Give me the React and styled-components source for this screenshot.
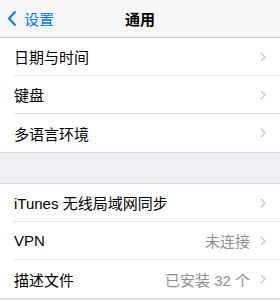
import React from "react";
import styled, { createGlobalStyle } from "styled-components";

const GlobalStyle = createGlobalStyle`
    body {
        margin: 0;
        background: #efeff4;
        font-family: "Liberation Sans", "Noto Sans CJK SC", sans-serif;
    }
`;

const Page = styled.div`
    width: 280px;
    height: 301px;
    overflow: hidden;
    background: #efeff4;
`;

const NavBar = styled.div`
    height: 37px;
    background: #f7f7f8;
    border-bottom: 1px solid #c8c7cc;
    display: grid;
    grid-template-columns: 1fr auto 1fr;
    align-items: center;
`;

const BackButton = styled.div`
    display: flex;
    align-items: center;
    gap: 7px;
    padding-left: 7px;
    color: #007aff;
    font-size: 15px;
`;

const Title = styled.div`
    font-size: 15px;
    font-weight: 600;
    color: #000;
`;

const Group = styled.div`
    background: #fff;
    border-bottom: 1px solid #d9d9de;
    border-top: ${(p) => (p.top ? "1px solid #d9d9de" : "none")};
`;

const Row = styled.div`
    height: 38px;
    margin-left: 14px;
    padding-right: 14px;
    display: flex;
    align-items: center;
    border-bottom: ${(p) => (p.last ? "none" : "1px solid #e3e3e6")};
    box-sizing: border-box;
`;

const Label = styled.div`
    flex: 1;
    font-size: 15px;
    color: #000;
`;

const Detail = styled.div`
    font-size: 15px;
    color: #8e8e93;
    margin-right: 10px;
`;

const Spacer = styled.div`
    height: 30px;
`;

function Chevron() {
    return (
        <svg width="6" height="10" viewBox="0 0 6 10">
            <path d="M1 1 L5 5 L1 9" fill="none" stroke="#c7c7cc" strokeWidth="1.5" />
        </svg>
    );
}

function BackChevron() {
    return (
        <svg width="10" height="17" viewBox="0 0 10 17">
            <path d="M8.5 1.5 L2 8.5 L8.5 15.5" fill="none" stroke="#007aff" strokeWidth="2" />
        </svg>
    );
}

function Item({ label, detail, last }) {
    return (
        <Row last={last}>
            <Label>{label}</Label>
            {detail && <Detail>{detail}</Detail>}
            <Chevron />
        </Row>
    );
}

export default function App() {
    return (
        <Page>
            <GlobalStyle />
            <NavBar>
                <BackButton>
                    <BackChevron />
                    设置
                </BackButton>
                <Title>通用</Title>
                <div />
            </NavBar>
            <Group>
                <Item label="日期与时间" />
                <Item label="键盘" />
                <Item label="多语言环境" last />
            </Group>
            <Spacer />
            <Group top>
                <Item label="iTunes 无线局域网同步" />
                <Item label="VPN" detail="未连接" />
                <Item label="描述文件" detail="已安装 32 个" last />
            </Group>
        </Page>
    );
}
